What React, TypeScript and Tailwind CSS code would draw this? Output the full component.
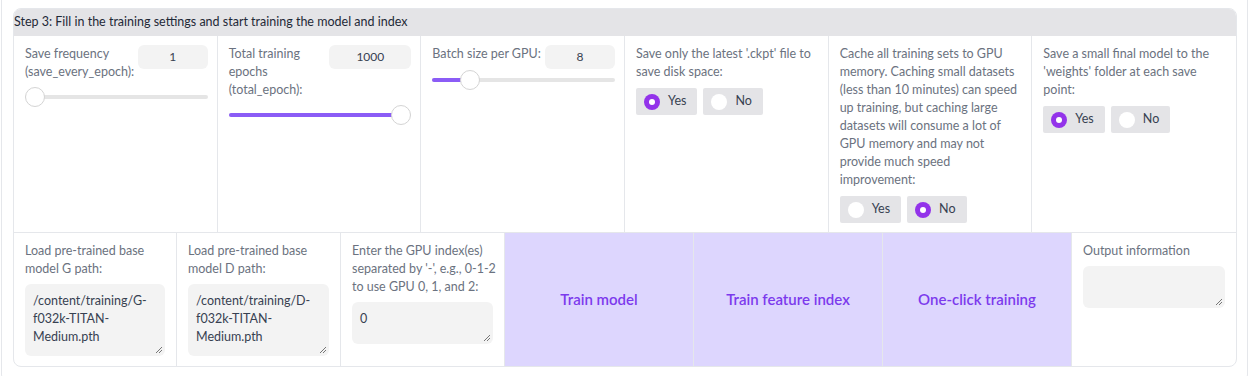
import React from 'react';

const font = { fontFamily: 'Lato, "Noto Sans", sans-serif' };

function NumberBox({ value, w }: { value: string; w: string }) {
  return (
    <div className={`${w} h-[24px] shrink-0 rounded-md bg-[#f3f3f3] flex items-center justify-center text-[12px] text-[#374151]`}>
      {value}
    </div>
  );
}

// thumb travels inside the track, like a native range input
function Slider({ pct }: { pct: number }) {
  return (
    <div className="relative h-5 flex items-center">
      <div className="w-full h-[4px] rounded-full bg-[#e5e5e5]" />
      <div
        className="absolute left-0 h-[4px] rounded-full bg-[#8b5cf6]"
        style={{ width: `calc(${pct / 100} * (100% - 20px) + 10px)`, display: pct === 0 ? 'none' : 'block' }}
      />
      <div
        className="absolute w-[20px] h-[20px] rounded-full bg-white border border-[#d4d4d4]"
        style={{ left: `calc(${pct / 100} * (100% - 20px))` }}
      />
    </div>
  );
}

function Radio({ label, checked }: { label: string; checked: boolean }) {
  return (
    <div className="h-[27px] flex items-center gap-2 pl-[8px] pr-[11px] bg-[#e4e4e7] rounded-[2px] text-[12.5px] text-[#374151]">
      {checked ? (
        <span className="w-4 h-4 rounded-full bg-[#9333ea] flex items-center justify-center">
          <span className="w-[6px] h-[6px] rounded-full bg-white" />
        </span>
      ) : (
        <span className="w-4 h-4 rounded-full bg-white" />
      )}
      {label}
    </div>
  );
}

function Radios({ yes }: { yes: boolean }) {
  return (
    <div className="flex gap-[6px] mt-[7px]">
      <Radio label="Yes" checked={yes} />
      <Radio label="No" checked={!yes} />
    </div>
  );
}

function TextBox({ lines, h }: { lines: string[]; h: string }) {
  return (
    <div className={`relative ${h} rounded-md bg-[#f3f3f3] px-[8px] py-[8px] text-[12.5px] leading-[18px] text-[#374151]`}>
      {lines.map((l) => (
        <div key={l}>{l}</div>
      ))}
      <svg className="absolute right-[2px] bottom-[2px]" width="8" height="8" viewBox="0 0 8 8">
        <path d="M7 1L1 7M7 4L4 7" stroke="#555" strokeWidth="0.8" />
      </svg>
    </div>
  );
}

const label = 'text-[12.5px] leading-[18px] text-[#6b7280]';

export default function App() {
  return (
    <div className="bg-white w-[1253px] h-[376px] overflow-hidden" style={font}>
      <div className="ml-px w-[1247px] h-[382px] border border-t-0 border-[#e5e7eb] rounded-b-lg pl-[11px] pt-[8px]">
        <div className="w-[1224px] border border-[#e5e7eb] rounded-lg overflow-hidden">
          {/* header */}
          <div className="h-[27px] bg-[#e4e4e7] flex items-center text-[12.5px] text-[#1f2937]">
            Step 3: Fill in the training settings and start training the model and index
          </div>

          {/* row 1 */}
          <div className="grid grid-cols-6 h-[197px] divide-x divide-[#e5e7eb] border-b border-[#e5e7eb]">
            <div className="pl-[11px] pr-[9px] pt-[9px]">
              <div className="flex justify-between items-start">
                <div className={label}>Save frequency<br />(save_every_epoch):</div>
                <NumberBox value="1" w="w-[70px]" />
              </div>
              <div className="mt-[6px]">
                <Slider pct={0} />
              </div>
            </div>
            <div className="pl-[11px] pr-[9px] pt-[9px]">
              <div className="flex justify-between items-start">
                <div className={label}>Total training<br />epochs<br />(total_epoch):</div>
                <NumberBox value="1000" w="w-[82px]" />
              </div>
              <div className="mt-[6px]">
                <Slider pct={100} />
              </div>
            </div>
            <div className="pl-[11px] pr-[9px] pt-[9px]">
              <div className="flex justify-between items-start">
                <div className={label}>Batch size per GPU:</div>
                <NumberBox value="8" w="w-[70px]" />
              </div>
              <div className="mt-[1px]">
                <Slider pct={17} />
              </div>
            </div>
            <div className="pl-[11px] pr-[9px] pt-[9px]">
              <div className={label}>Save only the latest '.ckpt' file to save disk space:</div>
              <Radios yes={true} />
            </div>
            <div className="pl-[11px] pr-[9px] pt-[9px]">
              <div className={label}>
                Cache all training sets to GPU memory. Caching small datasets (less than 10 minutes) can speed up
                training, but caching large datasets will consume a lot of GPU memory and may not provide much speed
                improvement:
              </div>
              <Radios yes={false} />
            </div>
            <div className="pl-[11px] pr-[9px] pt-[9px]">
              <div className={label}>Save a small final model to the 'weights' folder at each save point:</div>
              <Radios yes={true} />
            </div>
          </div>

          {/* row 2 */}
          <div className="flex h-[133px] divide-x divide-[#e5e7eb]">
            <div className="w-[163px] shrink-0 px-[11px] pt-[9px]">
              <div className={label}>Load pre-trained base model G path:</div>
              <div className="mt-[6px]">
                <TextBox lines={['/content/training/G-', 'f032k-TITAN-', 'Medium.pth']} h="h-[72px]" />
              </div>
            </div>
            <div className="w-[164px] shrink-0 px-[11px] pt-[9px]">
              <div className={label}>Load pre-trained base model D path:</div>
              <div className="mt-[6px]">
                <TextBox lines={['/content/training/D-', 'f032k-TITAN-', 'Medium.pth']} h="h-[72px]" />
              </div>
            </div>
            <div className="w-[164px] shrink-0 px-[11px] pt-[9px]">
              <div className={`${label} whitespace-nowrap`}>
                Enter the GPU index(es)<br />separated by '-', e.g., 0-1-2<br />to use GPU 0, 1, and 2:
              </div>
              <div className="mt-[6px]">
                <TextBox lines={['0']} h="h-[42px]" />
              </div>
            </div>
            <div className="flex-1 flex divide-x divide-[#e5e7eb] bg-[#ddd6fe]">
              {['Train model', 'Train feature index', 'One-click training'].map((t) => (
                <div key={t} className="flex-1 flex items-center justify-center text-[15px] font-semibold text-[#7c3aed]">
                  {t}
                </div>
              ))}
            </div>
            <div className="w-[164px] shrink-0 px-[11px] pt-[9px]">
              <div className={label}>Output information</div>
              <div className="mt-[6px]">
                <TextBox lines={[]} h="h-[42px]" />
              </div>
            </div>
          </div>
        </div>
      </div>
    </div>
  );
}
